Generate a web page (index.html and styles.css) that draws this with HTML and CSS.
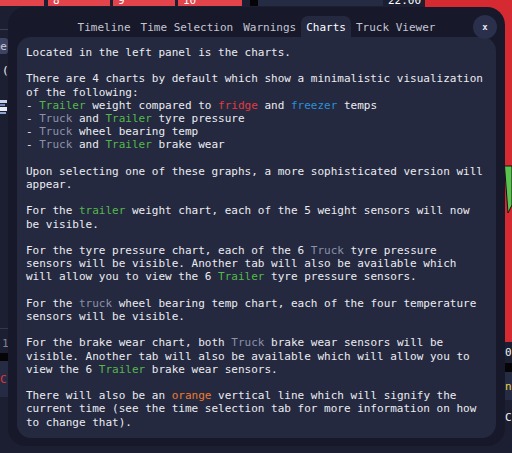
FILE: index.html
```html
<!DOCTYPE html>
<html>
<head>
<meta charset="utf-8">
<link rel="stylesheet" href="styles.css">
</head>
<body>
<div class="app">
  <div class="maincol">
    <div class="timebar">
      <div class="cell red c1"></div>
      <div class="cell red c2">8</div>
      <div class="cell red c3">9</div>
      <div class="cell red c4">10</div>
      <div class="cell dk c5"></div>
      <div class="cell blk c6"></div>
      <div class="cell navy c7"></div>
      <div class="cell clock">22:00</div>
    </div>
    <div class="side">
      <div class="sep"></div>
      <div class="sidebtn"><span>Time</span></div>
      <div class="sidetxt paren"><span>(</span></div>
      <div class="sideicon">
        <svg width="8" height="19" viewBox="0 0 8 19"><rect x="0" y="2" width="7" height="3" fill="#c9d4ea"/><rect x="0" y="6" width="5" height="2" fill="#6f86b8"/><rect x="0" y="9" width="7" height="4" fill="#e9eef8"/><rect x="0" y="14" width="6" height="2" fill="#8fa3cc"/></svg>
      </div>
      <div class="sep2"></div>
      <div class="sidetxt one"><span>1</span></div>
      <div class="blackbar"></div>
      <div class="navyblock"><span class="crit">Cr</span></div>
    </div>
  </div>
  <div class="rightcol">
    <div class="chart">
      <svg class="tri" width="8" height="50" viewBox="0 0 8 50"><polygon points="0.5,1 8,1 8,40 4,48" fill="#5ac34f" stroke="#111" stroke-width="1"/></svg>
    </div>
    <div class="rbits">
      <div class="rtxt">0</div>
      <div class="rblack"></div>
      <div class="rnavy"><span class="yel">n</span></div>
      <div class="rtxt rc">C</div>
    </div>
  </div>
</div>

<div class="modal">
  <div class="tabs">
    <div class="tab">Timeline</div>
    <div class="tab">Time Selection</div>
    <div class="tab">Warnings</div>
    <div class="tab active">Charts</div>
    <div class="tab">Truck Viewer</div>
  </div>
  <div class="close">x</div>
  <div class="panel"><pre class="body">Located in the left panel is the charts.

There are 4 charts by default which show a minimalistic visualization
of the following:
- <span class="tr">Trailer</span> weight compared to <span class="fr">fridge</span> and <span class="fz">freezer</span> temps
- <span class="tk">Truck</span> and <span class="tr">Trailer</span> tyre pressure
- <span class="tk">Truck</span> wheel bearing temp
- <span class="tk">Truck</span> and <span class="tr">Trailer</span> brake wear

Upon selecting one of these graphs, a more sophisticated version will
appear.

For the <span class="tr">trailer</span> weight chart, each of the 5 weight sensors will now
be visible.

For the tyre pressure chart, each of the 6 <span class="tk">Truck</span> tyre pressure
sensors will be visible. Another tab will also be available which
will allow you to view the 6 <span class="tr">Trailer</span> tyre pressure sensors.

For the <span class="tk">truck</span> wheel bearing temp chart, each of the four temperature
sensors will be visible.

For the brake wear chart, both <span class="tk">Truck</span> brake wear sensors will be
visible. Another tab will also be available which will allow you to
view the 6 <span class="tr">Trailer</span> brake wear sensors.

There will also be an <span class="or">orange</span> vertical line which will signify the
current time (see the time selection tab for more information on how
to change that).</pre></div>
</div>
</body>
</html>
```

FILE: styles.css
```css
html, body {
  margin: 0;
  padding: 0;
}
body {
  width: 512px;
  height: 453px;
  overflow: hidden;
  background: #1c1e31;
  font-family: "DejaVu Sans Mono", monospace;
  font-size: 11px;
  color: #ececf0;
}

.app {
  display: flex;
  height: 453px;
}
.maincol {
  width: 425px;
  display: flex;
  flex-direction: column;
}
.timebar {
  display: flex;
  height: 6px;
  overflow: hidden;
}
.cell {
  height: 6px;
  display: flex;
  align-items: flex-end;
  line-height: 10px;
  color: #fff;
  box-sizing: border-box;
  overflow: hidden;
  flex: none;
}
.red { background: #e3434b; padding-left: 5px; }
.c1 { width: 44px; margin-right: 4px; }
.c2 { width: 62px; margin-right: 3px; }
.c3 { width: 62px; margin-right: 3px; }
.c4 { width: 64px; }
.dk { width: 8px; background: #1c1e31; }
.blk { width: 8px; background: #050508; }
.navy { width: 125px; background: #262b44; }
.clock { padding-left: 5px; width: 38px; }

.side {
  width: 8px;
  display: flex;
  flex-direction: column;
  overflow: hidden;
}
.sep {
  height: 1px;
  background: #3b3f57;
  margin-top: 23px;
}
.sidebtn {
  margin-top: 8px;
  height: 16px;
  background: #3d4363;
  color: #c9cbd8;
  display: flex;
  justify-content: flex-end;
  align-items: center;
  white-space: nowrap;
  border-radius: 0 3px 3px 0;
}
.sidebtn span { margin-right: 1px; }
.sidetxt {
  display: flex;
  justify-content: flex-end;
  white-space: nowrap;
  line-height: 11px;
}
.paren { margin-top: 11px; color: #f2f2f2; justify-content: flex-start; padding-left: 2px; }
.sideicon { margin-top: 22px; height: 19px; }
.sep2 {
  margin-top: 211px;
  height: 1px;
  background: #33374d;
}
.one { margin-top: 9px; color: #7f8399; justify-content: flex-start; padding-left: 2px; }
.blackbar { margin-top: 4px; height: 8px; background: #050508; }
.navyblock {
  height: 36px;
  background: #262b44;
  display: flex;
  align-items: center;
  white-space: nowrap;
}
.crit { color: #e0343c; }

.rightcol {
  width: 87px;
  display: flex;
  flex-direction: column;
}
.chart {
  height: 342px;
  background: #d52a32;
  display: flex;
  justify-content: flex-end;
}
.tri { margin-top: 165px; }
.rbits {
  padding-left: 80px;
  display: flex;
  flex-direction: column;
}
.rtxt { line-height: 11px; color: #f0f0f0; margin-top: 5px; white-space: nowrap; }
.rblack { height: 9px; background: #050508; margin-top: 5px; }
.rnavy { height: 28px; background: #262b44; display: flex; align-items: center; }
.yel { color: #e8d44a; }
.rc { margin-top: 12px; }

/* modal */
.modal {
  position: absolute;
  left: 8px;
  top: 7px;
  width: 497px;
  height: 439px;
  box-sizing: border-box;
  background: #17182a;
  border-radius: 18px;
  padding: 9px;
  display: flex;
  flex-direction: column;
}
.tabs {
  display: flex;
  justify-content: center;
  height: 21px;
}
.tab {
  padding: 1px 5px 0;
  height: 20px;
  line-height: 22px;
  color: #c4c6d2;
  white-space: nowrap;
}
.tab.active {
  background: #242940;
  color: #ffffff;
  border-radius: 7px 7px 0 0;
}
.close {
  position: absolute;
  top: 8px;
  right: 8px;
  width: 24px;
  height: 24px;
  border-radius: 50%;
  background: #2a2f4b;
  color: #e8e8f0;
  display: flex;
  align-items: center;
  justify-content: center;
  font-weight: bold;
  font-size: 9px;
}
.panel {
  flex: 1;
  background: #242940;
  border-radius: 14px;
  padding: 9px;
}
.body {
  margin: 0;
  font-family: "DejaVu Sans Mono", monospace;
  font-size: 11px;
  line-height: 13.2px;
  color: #ececf0;
  white-space: pre;
}
.tr { color: #55b84a; }
.fr { color: #e23a3f; }
.fz { color: #2a8fd8; }
.tk { color: #8c91a9; }
.or { color: #ef7b2e; }
```
